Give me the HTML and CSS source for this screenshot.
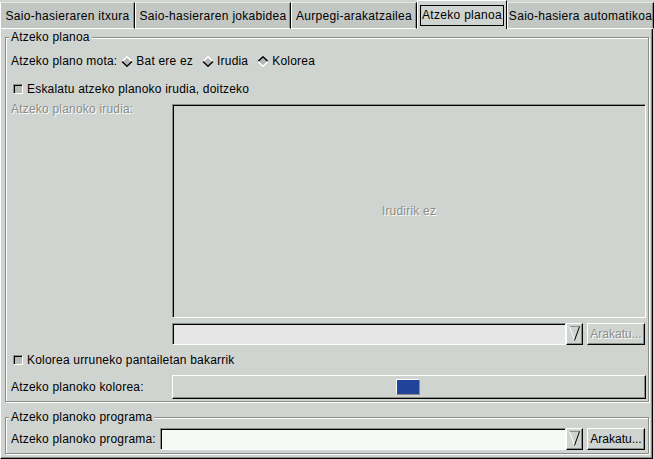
FILE: index.html
```html
<!DOCTYPE html>
<html>
<head>
<meta charset="utf-8">
<link rel="stylesheet" href="styles.css">
</head>
<body>
<div class="tabs">
  <div class="tab t1">Saio-hasieraren itxura</div>
  <div class="tab t2">Saio-hasieraren jokabidea</div>
  <div class="tab t3">Aurpegi-arakatzailea</div>
  <div class="tab t4 active"><span class="focus">Atzeko planoa</span></div>
  <div class="tab t5">Saio-hasiera automatikoa</div>
</div>
<div class="page">
  <div class="frame f1">
    <div class="legend">Atzeko planoa</div>
    <div class="row mota">
      <span>Atzeko plano mota:</span>
      <span class="radio first"><svg width="12" height="11" viewBox="0 0 12 11"><path d="M1 5.5 L6 0.8 L11 5.5 L6 10.2 Z" fill="#b4b8b4"/><path d="M1 5.5 L6 0.8 L11 5.5" fill="none" stroke="#fff" stroke-width="1.5"/><path d="M1 5.5 L6 10.2 L11 5.5" fill="none" stroke="#000" stroke-width="1.4"/></svg>Bat ere ez</span>
      <span class="radio"><svg width="12" height="11" viewBox="0 0 12 11"><path d="M1 5.5 L6 0.8 L11 5.5 L6 10.2 Z" fill="#b4b8b4"/><path d="M1 5.5 L6 0.8 L11 5.5" fill="none" stroke="#fff" stroke-width="1.5"/><path d="M1 5.5 L6 10.2 L11 5.5" fill="none" stroke="#000" stroke-width="1.4"/></svg>Irudia</span>
      <span class="radio"><svg width="12" height="11" viewBox="0 0 12 11"><path d="M1 5.5 L6 0.8 L11 5.5 L6 10.2 Z" fill="#b4b8b4"/><path d="M1 5.5 L6 0.8 L11 5.5" fill="none" stroke="#000" stroke-width="1.4"/><path d="M1 5.5 L6 10.2 L11 5.5" fill="none" stroke="#fff" stroke-width="1.5"/></svg>Kolorea</span>
    </div>
    <div class="row checkrow c1"><span class="check"></span>Eskalatu atzeko planoko irudia, doitzeko</div>
    <div class="imgarea">
      <div class="imglabel disabled">Atzeko planoko irudia:</div>
      <div class="imgbox"><span class="disabled">Irudirik ez</span></div>
      <div class="combo">
        <div class="entry off"></div>
        <div class="arrowbtn"><svg width="11" height="15" viewBox="0 0 11 15"><path d="M0.5 0.5 L10.5 0.5" stroke="#8a8e8a" fill="none"/><path d="M0.5 0.5 L5.5 14.5" stroke="#fff" fill="none"/><path d="M10.5 0.5 L5.5 14.5" stroke="#000" fill="none"/></svg></div>
        <div class="btn disabled">Arakatu...</div>
      </div>
    </div>
    <div class="row checkrow c2"><span class="check"></span>Kolorea urruneko pantailetan bakarrik</div>
    <div class="colorrow">
      <span>Atzeko planoko kolorea:</span>
      <div class="colorbtn"><span class="swatch"></span></div>
    </div>
  </div>
  <div class="frame f2">
    <div class="legend">Atzeko planoko programa</div>
    <div class="progrow">
      <span class="proglabel">Atzeko planoko programa:</span>
      <div class="entry on"></div>
      <div class="arrowbtn"><svg width="11" height="15" viewBox="0 0 11 15"><path d="M0.5 0.5 L10.5 0.5" stroke="#8a8e8a" fill="none"/><path d="M0.5 0.5 L5.5 14.5" stroke="#fff" fill="none"/><path d="M10.5 0.5 L5.5 14.5" stroke="#000" fill="none"/></svg></div>
      <div class="btn">Arakatu...</div>
    </div>
  </div>
</div>
</body>
</html>
```

FILE: styles.css
```css
body {
  margin: 0;
  width: 654px;
  height: 459px;
  overflow: hidden;
  background: #d0d4d0;
  font-family: "Liberation Sans", Arial, sans-serif;
  font-size: 12px;
  letter-spacing: 0.2px;
  color: #000;
}

.tabs {
  display: flex;
  align-items: flex-end;
  height: 29px;
}

.tab {
  box-sizing: border-box;
  height: 27px;
  display: flex;
  align-items: center;
  justify-content: center;
  white-space: nowrap;
  letter-spacing: 0.3px;
  background: #c3c7c3;
  border-top: 1px solid #e4e8e4;
  border-left: 1px solid #fff;
  border-right: 1px solid #000;
  border-bottom: 1px solid #fff;
  box-shadow: inset -1px 0 #8a8e8a;
}

.t1 { width: 135px; }
.t2 { width: 156px; }
.t3 { width: 126px; }
.t4 { width: 90px; }
.t5 { width: 147px; }

.tab.active {
  height: 29px;
  background: #d0d4d0;
  border-top: 1px solid #fff;
  border-bottom: none;
  box-shadow: none;
}

.focus {
  border: 1px solid #000;
  padding: 2px 1px;
  line-height: 15px;
}

.page {
  box-sizing: border-box;
  width: 653px;
  height: 430px;
  border-left: 1px solid #fff;
  border-right: 1px solid #000;
  border-bottom: 1px solid #000;
  box-shadow: inset -1px -1px #8a8e8a;
  padding: 8px 3px 0 4px;
}

.frame {
  box-sizing: border-box;
  display: flex;
  flex-direction: column;
  border: 1px solid #8a8e8a;
  box-shadow: inset 1px 1px #fff, 1px 1px #fff;
  padding: 0 2px 0 5px;
}

.f1 { height: 365px; }
.f2 { height: 37px; margin-top: 15px; }

.legend {
  align-self: flex-start;
  margin: -8px 0 0 -2px;
  padding: 0 2px;
  line-height: 14px;
  background: #d0d4d0;
}

.row {
  display: flex;
  align-items: center;
  height: 20px;
  white-space: nowrap;
}

.mota { margin-top: 7px; }

.radio {
  display: flex;
  align-items: center;
  gap: 3px;
  margin-left: 9px;
}
.radio.first { margin-left: 4px; }
.radio svg { display: block; }

.checkrow.c1 { margin-top: 8px; }
.checkrow.c2 { margin-top: 5px; }

.check {
  box-sizing: border-box;
  width: 10px;
  height: 10px;
  margin: 0 4px 0 2px;
  border: 1px solid;
  border-color: #8a8e8a #fff #fff #8a8e8a;
  box-shadow: inset 1px 1px #000;
  background: #b8bcb8;
}

.disabled {
  color: #8a8e8a;
  text-shadow: 1px 1px 0 #fff;
}

.imgarea {
  display: grid;
  grid-template-columns: 161px 1fr;
  grid-template-rows: 214px 22px;
  row-gap: 5px;
  margin-top: 5px;
}

.imglabel {
  line-height: 14px;
  margin-top: -2px;
  white-space: nowrap;
}

.imgbox {
  box-sizing: border-box;
  display: flex;
  align-items: center;
  justify-content: center;
  border: 1px solid;
  border-color: #8a8e8a #fff #fff #8a8e8a;
  box-shadow: inset 1px 1px #000;
}

.combo {
  grid-column: 2;
  display: flex;
}

.entry {
  flex: 1;
  box-sizing: border-box;
  border: 1px solid;
  border-color: #8a8e8a #fff #fff #8a8e8a;
  box-shadow: inset 1px 1px #000;
}
.entry.off { background: #e6e6e6; }
.entry.on { background: #f6faf6; }

.arrowbtn {
  box-sizing: border-box;
  width: 17px;
  display: flex;
  align-items: center;
  justify-content: center;
  border: 1px solid;
  border-color: #fff #000 #000 #fff;
  box-shadow: inset -1px -1px #8a8e8a;
}
.arrowbtn svg { display: block; margin-top: -1px; }

.btn {
  box-sizing: border-box;
  width: 58px;
  margin: 0 1px 0 4px;
  display: flex;
  align-items: center;
  justify-content: center;
  white-space: nowrap;
  letter-spacing: 0;
  border: 1px solid;
  border-color: #fff #000 #000 #fff;
  box-shadow: inset -1px -1px #8a8e8a;
}

.colorrow {
  display: grid;
  grid-template-columns: 161px 1fr;
  align-items: center;
  height: 24px;
  margin-top: 5px;
  white-space: nowrap;
}

.colorbtn {
  box-sizing: border-box;
  height: 24px;
  display: flex;
  align-items: center;
  justify-content: center;
  border: 1px solid;
  border-color: #fff #000 #000 #fff;
  box-shadow: inset -1px -1px #8a8e8a;
}

.swatch {
  box-sizing: border-box;
  width: 24px;
  height: 16px;
  margin-left: -3px;
  border: 1px solid;
  border-color: #fff #8a8e8a #8a8e8a #fff;
  background: #21449a;
}

.progrow {
  display: flex;
  height: 22px;
  margin-top: 4px;
}

.proglabel {
  width: 149px;
  align-self: center;
  white-space: nowrap;
}
```
